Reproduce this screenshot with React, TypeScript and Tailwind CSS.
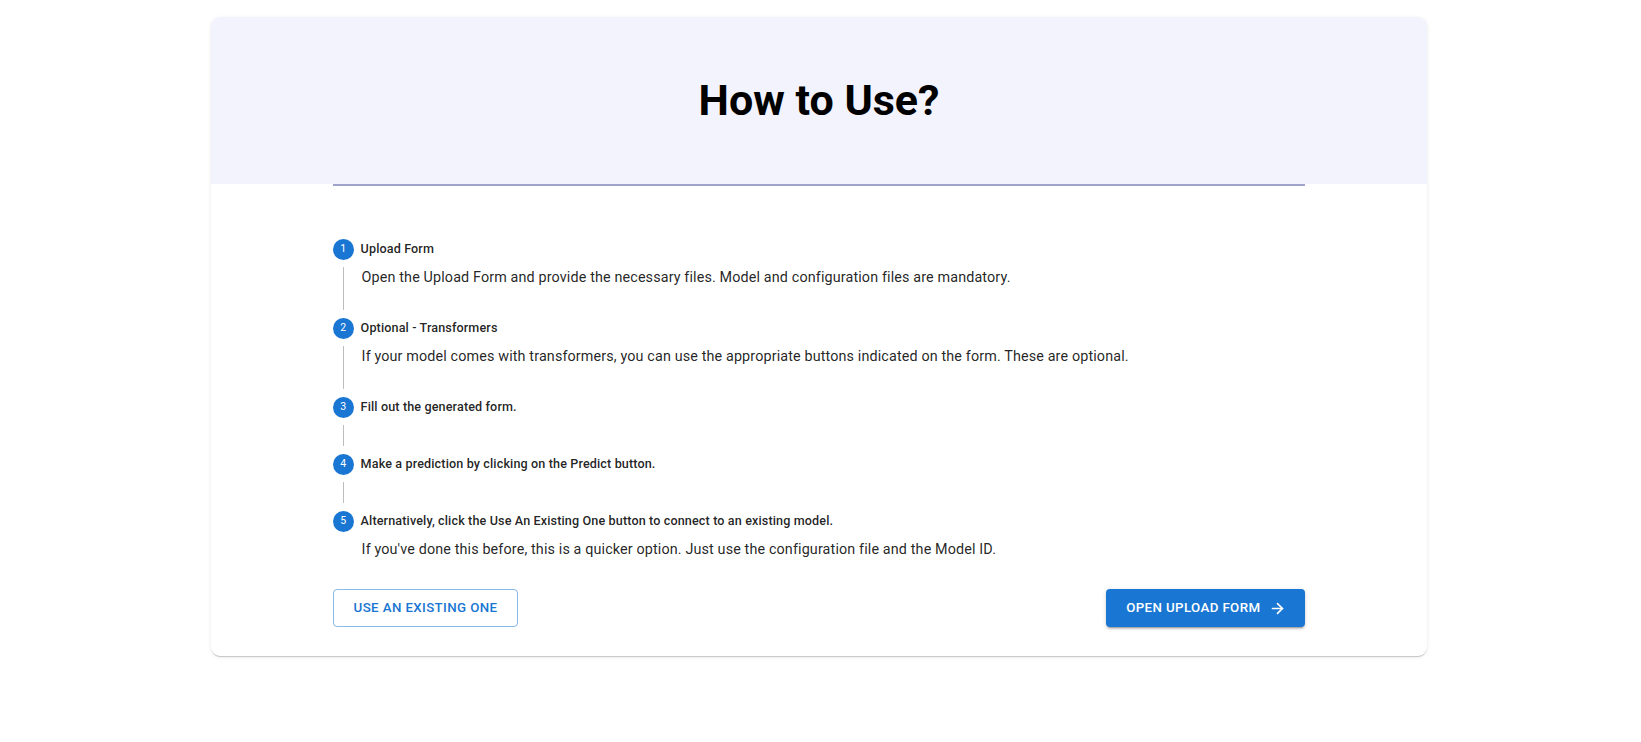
import { ArrowRight } from "lucide-react"

type Step = {
  label: string
  text?: string
}

const steps: Step[] = [
  {
    label: "Upload Form",
    text: "Open the Upload Form and provide the necessary files. Model and configuration files are mandatory.",
  },
  {
    label: "Optional - Transformers",
    text: "If your model comes with transformers, you can use the appropriate buttons indicated on the form. These are optional.",
  },
  { label: "Fill out the generated form." },
  { label: "Make a prediction by clicking on the Predict button." },
  {
    label: "Alternatively, click the Use An Existing One button to connect to an existing model.",
    text: "If you've done this before, this is a quicker option. Just use the configuration file and the Model ID.",
  },
]

function StepItem({ step, index, last }: { step: Step; index: number; last: boolean }) {
  return (
    <div>
      <div className="flex items-center h-[36px]">
        <div className="w-[21px] h-[21px] rounded-full bg-[#1976d2] text-white text-[10.5px] flex items-center justify-center shrink-0">
          {index + 1}
        </div>
        <span className="pl-[7px] text-[12.6px] font-medium text-black/[0.87] tracking-[0.01em]">
          {step.label}
        </span>
      </div>
      {step.text ? (
        <div
          className={`ml-[10.5px] pl-[17.5px] h-[22px] flex items-center border-l ${
            last ? "border-transparent" : "border-[#bdbdbd]"
          }`}
        >
          <p className="text-[14.35px] text-black/[0.87] tracking-[0.00938em] leading-[1.5]">{step.text}</p>
        </div>
      ) : null}
      {!last ? <div className="ml-[10.5px] h-[21px] border-l border-[#bdbdbd]" /> : null}
    </div>
  )
}

export default function App() {
  return (
    <main className="min-h-screen bg-white pt-[17px]" style={{ fontFamily: "Roboto, 'Liberation Sans', sans-serif" }}>
      <div className="ml-[211px] w-[1216px] bg-white rounded-[9px] overflow-hidden shadow-[0_2px_1px_-1px_rgba(0,0,0,0.12),0_1px_1px_0_rgba(0,0,0,0.08),0_1px_4px_0_rgba(0,0,0,0.08)] pb-[29px]">
        <div className="h-[167px] bg-[#f2f3fc] flex items-center justify-center">
          <h1 className="text-[43px] font-bold text-black leading-none">How to Use?</h1>
        </div>

        <div className="w-[80%] mx-auto">
          <div className="h-[2px] bg-[#9fa3cb]" />

          <div className="mt-[45px]">
            {steps.map((step, i) => (
              <StepItem key={step.label} step={step} index={i} last={i === steps.length - 1} />
            ))}
          </div>

          <div className="mt-[28px] flex items-center justify-between">
            <button
              type="button"
              className="h-[38px] px-[20px] rounded-[4px] border border-[#1976d2]/50 text-[#1976d2] text-[13.3px] font-medium uppercase tracking-[0.02857em]"
            >
              Use An Existing One
            </button>
            <button
              type="button"
              className="h-[38px] pl-[20px] pr-[19px] rounded-[4px] bg-[#1976d2] text-white text-[13.3px] font-medium uppercase tracking-[0.02857em] flex items-center shadow-[0_3px_1px_-2px_rgba(0,0,0,0.2),0_2px_2px_0_rgba(0,0,0,0.14),0_1px_5px_0_rgba(0,0,0,0.12)]"
            >
              Open Upload Form
              <ArrowRight className="ml-[9px] w-[17px] h-[17px]" strokeWidth={2.4} />
            </button>
          </div>
        </div>
      </div>
    </main>
  )
}
